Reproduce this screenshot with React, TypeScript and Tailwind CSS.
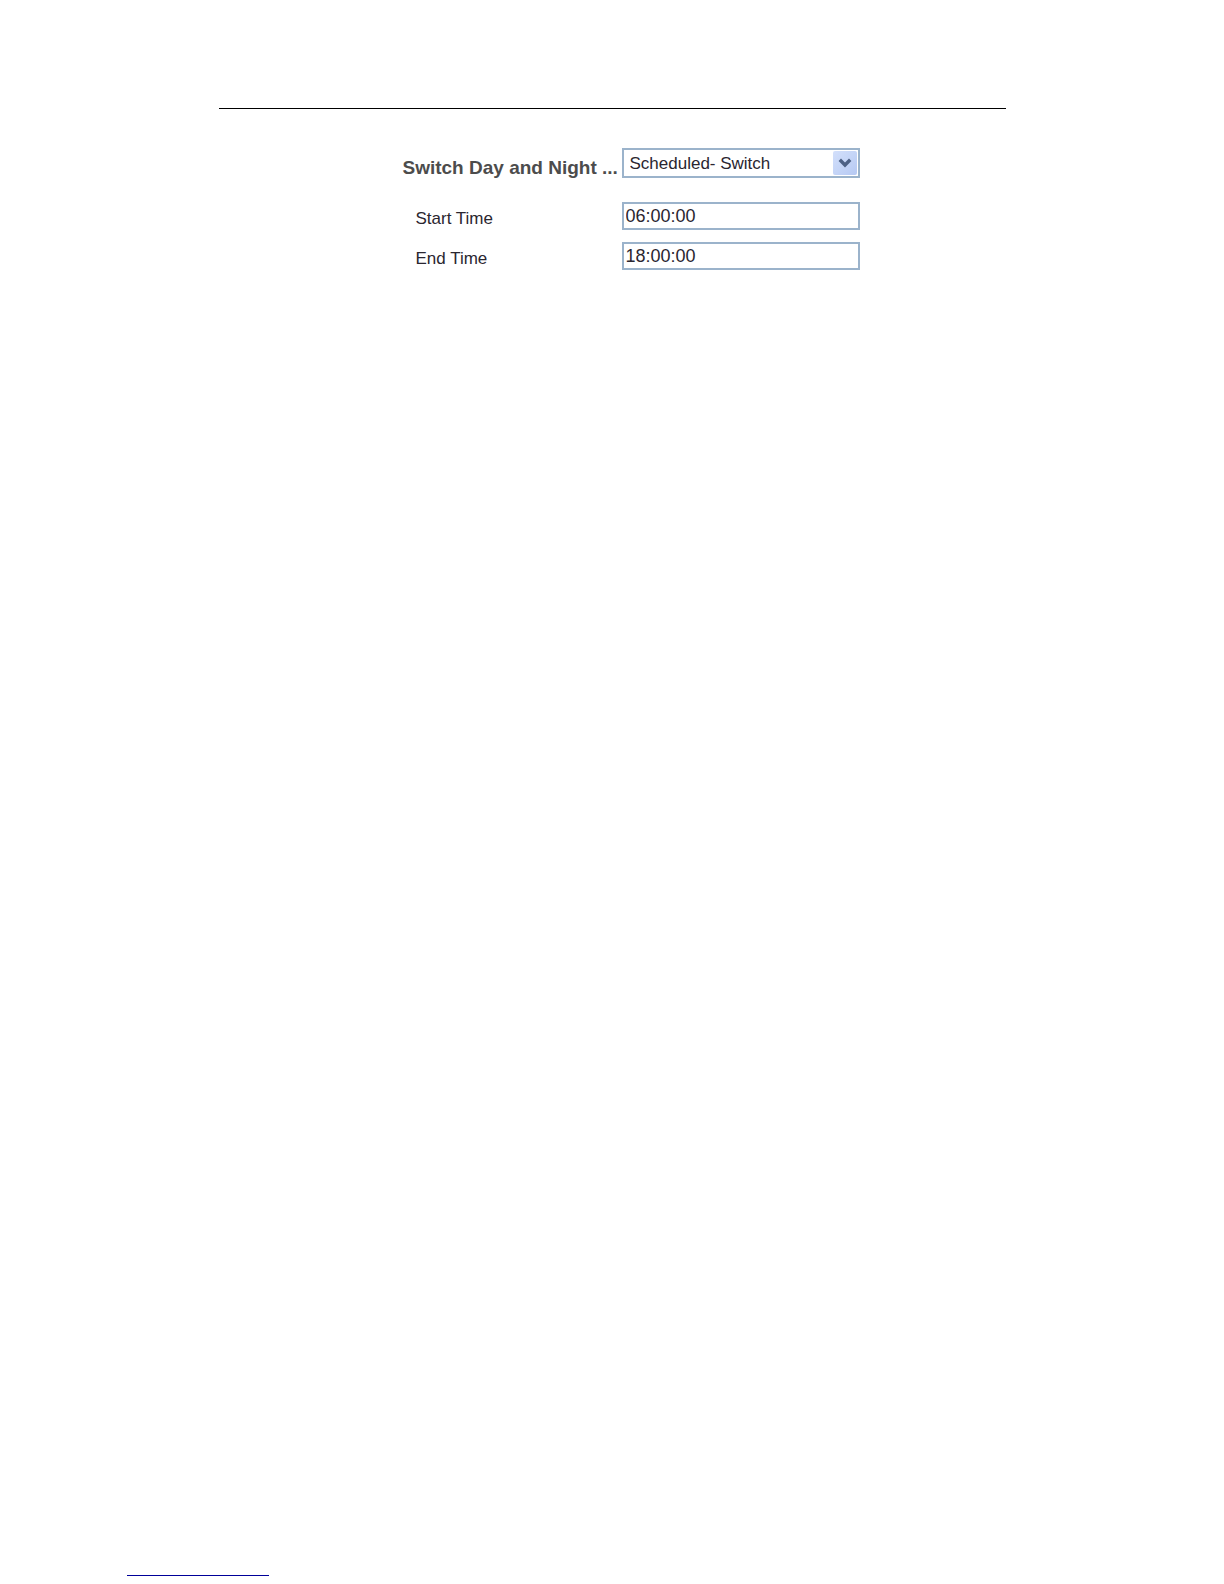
import { useState } from "react";

const timeFields = [
  { id: "start-time", label: "Start Time", value: "06:00:00" },
  { id: "end-time", label: "End Time", value: "18:00:00" },
];

function ModeSelect() {
  return (
    <div className="relative">
      <select
        id="switch-mode"
        className="block h-[30px] w-full appearance-none border-2 border-[#9bb3cb] bg-white pt-px pr-8 pl-[6px] text-[17px] leading-6 text-[#2a2630] outline-none"
      >
        <option>Scheduled- Switch</option>
      </select>
      <span className="pointer-events-none absolute top-[3px] right-[3px] flex h-6 w-6 items-center justify-center rounded-xs bg-linear-to-br from-[#d3e0fb] to-[#b6c9f3]">
        <svg width="14" height="10" viewBox="0 0 14 10" fill="none" aria-hidden="true">
          <path d="M1.800 1.800L7 7l5.200-5.200" stroke="#4d6185" strokeWidth="3.4" />
        </svg>
      </span>
    </div>
  );
}

function TimeField({ id, label, value }: { id: string; label: string; value: string }) {
  const [time, setTime] = useState(value);

  return (
    <>
      <label htmlFor={id} className="h-7 pt-[5px] pl-[13px] text-[17px] leading-6 text-[#2a2630]">
        {label}
      </label>
      <input
        id={id}
        type="text"
        value={time}
        onChange={(e) => setTime(e.target.value)}
        className="block h-7 w-full border-2 border-[#9bb3cb] bg-white pl-[2px] text-[18px] leading-6 text-[#2a2630] outline-none"
      />
    </>
  );
}

export default function App() {
  return (
    <div className="flex min-h-screen flex-col bg-white font-['Liberation_Sans',Arial,sans-serif]">
      <main className="mx-auto w-full max-w-[787px] pt-[108px]">
        <hr className="border-t border-black" />

        <form className="mt-[39px] grid grid-cols-[219px_238px] gap-y-3 pl-[184px]">
          <label
            htmlFor="switch-mode"
            className="pt-2 text-[19px] leading-6 font-bold whitespace-nowrap text-[#4c4c4c]"
          >
            Switch Day and Night ...
          </label>
          <div className="pb-3">
            <ModeSelect />
          </div>
          {timeFields.map((field) => (
            <TimeField key={field.id} {...field} />
          ))}
        </form>
      </main>

      <footer className="mt-auto pb-2 pl-[127px]">
        <hr className="w-[142px] border-t border-[#000099]" />
      </footer>
    </div>
  );
}
